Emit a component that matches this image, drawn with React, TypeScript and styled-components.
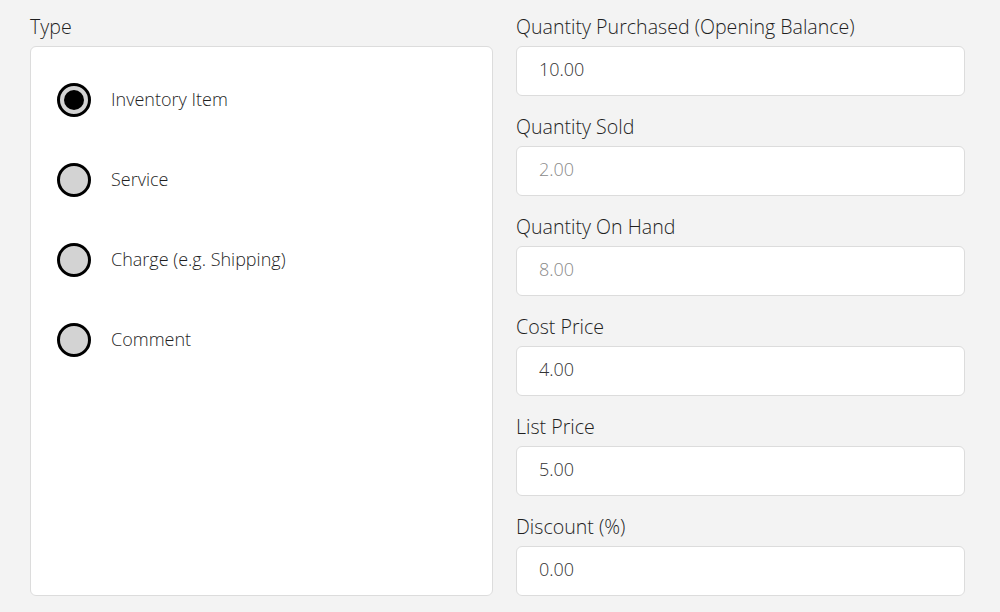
import React from "react"
import styled, { createGlobalStyle } from "styled-components"

const GlobalStyle = createGlobalStyle`
  html, body {
    margin: 0;
    padding: 0;
    background: #f3f3f3;
    font-family: "Open Sans", "Noto Sans", sans-serif;
    font-weight: 300;
    color: #333;
  }
`

const Page = styled.div`
  display: grid;
  grid-template-columns: 463px 449px;
  column-gap: 23px;
  padding: 11px 35px 0 30px;
`

const Column = styled.div`
  display: flex;
  flex-direction: column;
`

const Label = styled.div`
  font-size: 19.6px;
  line-height: 31px;
  height: 31px;
  margin-bottom: 4px;
  color: #1f1f1f;
  white-space: nowrap;
`

const Panel = styled.div`
  flex: 1;
  background: #fff;
  border: 1px solid #dcdcdc;
  border-radius: 6px;
  padding: 36px 0 0 26px;
  display: flex;
  flex-direction: column;
`

const RadioRow = styled.label`
  display: flex;
  align-items: center;
  gap: 20px;
  height: 34px;
  margin-bottom: 46px;
  font-size: 18px;
  line-height: 30px;
  color: #1f1f1f;
  cursor: pointer;

  & > span:last-child {
    margin-top: -3px;
  }
`

const RadioDot = styled.span<{ $checked?: boolean }>`
  box-sizing: border-box;
  width: 34px;
  height: 34px;
  border-radius: 50%;
  border: 3px solid #000;
  background: #d3d3d3;
  display: flex;
  align-items: center;
  justify-content: center;
  flex-shrink: 0;

  &::after {
    content: "";
    display: ${(p) => (p.$checked ? "block" : "none")};
    width: 20px;
    height: 20px;
    border-radius: 50%;
    background: #000;
  }
`

const Field = styled.div`
  display: flex;
  flex-direction: column;
  margin-bottom: 15px;

  &:last-child {
    margin-bottom: 0;
  }
`

const Input = styled.div<{ $disabled?: boolean }>`
  box-sizing: border-box;
  height: 50px;
  background: #fff;
  border: 1px solid #dcdcdc;
  border-radius: 6px;
  padding: 0 22px 4px;
  display: flex;
  align-items: center;
  font-size: 18px;
  color: ${(p) => (p.$disabled ? "#8a8a8a" : "#333")};
`

const types = [
  { label: "Inventory Item", checked: true },
  { label: "Service" },
  { label: "Charge (e.g. Shipping)" },
  { label: "Comment" },
]

const fields = [
  { label: "Quantity Purchased (Opening Balance)", value: "10.00" },
  { label: "Quantity Sold", value: "2.00", disabled: true },
  { label: "Quantity On Hand", value: "8.00", disabled: true },
  { label: "Cost Price", value: "4.00" },
  { label: "List Price", value: "5.00" },
  { label: "Discount (%)", value: "0.00" },
]

export default function App() {
  return (
    <>
      <GlobalStyle />
      <Page>
        <Column>
          <Label>Type</Label>
          <Panel>
            {types.map((t) => (
              <RadioRow key={t.label}>
                <RadioDot $checked={t.checked} />
                <span>{t.label}</span>
              </RadioRow>
            ))}
          </Panel>
        </Column>
        <Column>
          {fields.map((f) => (
            <Field key={f.label}>
              <Label>{f.label}</Label>
              <Input $disabled={f.disabled}>{f.value}</Input>
            </Field>
          ))}
        </Column>
      </Page>
    </>
  )
}
